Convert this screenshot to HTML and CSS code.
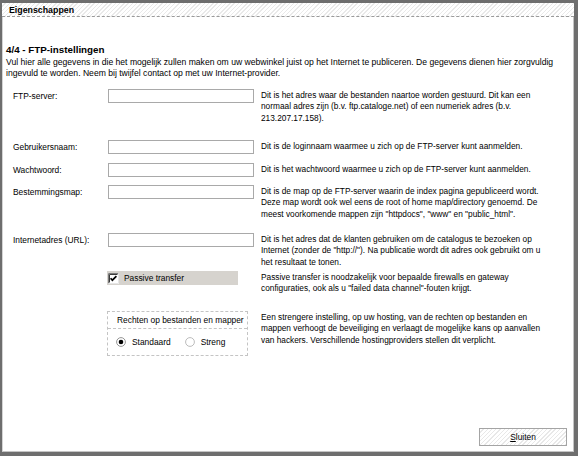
FILE: index.html
```html
<!DOCTYPE html>
<html lang="nl">
<head>
<meta charset="utf-8">
<title>Eigenschappen</title>
<link rel="stylesheet" href="styles.css">
</head>
<body>
<div class="window">
  <div class="titlebar"><span class="title">Eigenschappen</span></div>
  <div class="panel">
    <h1 class="step">4/4 - FTP-instellingen</h1>
    <p class="intro">Vul hier alle gegevens in die het mogelijk zullen maken om uw webwinkel juist op het Internet te publiceren. De gegevens dienen hier zorgvuldig<br>ingevuld te worden. Neem bij twijfel contact op met uw Internet-provider.</p>
    <div class="form">
      <label class="lbl">FTP-server:</label>
      <input class="field" type="text">
      <p class="hint">Dit is het adres waar de bestanden naartoe worden gestuurd. Dit kan een<br>normaal adres zijn (b.v. ftp.cataloge.net) of een numeriek adres (b.v.<br>213.207.17.158).</p>

      <label class="lbl">Gebruikersnaam:</label>
      <input class="field" type="text">
      <p class="hint">Dit is de loginnaam waarmee u zich op de FTP-server kunt aanmelden.</p>

      <label class="lbl">Wachtwoord:</label>
      <input class="field" type="password">
      <p class="hint">Dit is het wachtwoord waarmee u zich op de FTP-server kunt aanmelden.</p>

      <label class="lbl">Bestemmingsmap:</label>
      <input class="field" type="text">
      <p class="hint">Dit is de map op de FTP-server waarin de index pagina gepubliceerd wordt.<br>Deze map wordt ook wel eens de root of home map/directory genoemd. De<br>meest voorkomende mappen zijn "httpdocs", "www" en "public_html".</p>

      <label class="lbl">Internetadres (URL):</label>
      <input class="field" type="text">
      <p class="hint">Dit is het adres dat de klanten gebruiken om de catalogus te bezoeken op<br>Internet (zonder de "http://"). Na publicatie wordt dit adres ook gebruikt om u<br>het resultaat te tonen.</p>

      <span class="lbl"></span>
      <div class="passive">
        <svg class="check" width="11" height="11" viewBox="0 0 11 11"><rect x="0" y="0" width="11" height="11" fill="#fff"/><path d="M0.5 10.5V0.5H10.5" stroke="#7b7b7b" fill="none"/><path d="M1.5 9.5V1.5H9.5" stroke="#3a3a3a" fill="none"/><path d="M0.5 10.5H10.5V0.5" stroke="#e6e6e6" fill="none"/><path d="M2.6 5.2L4.4 7.2L8.4 3.2" stroke="#000" stroke-width="1.7" fill="none"/></svg>
        <span>Passive transfer</span>
      </div>
      <p class="hint">Passive transfer is noodzakelijk voor bepaalde firewalls en gateway<br>configuraties, ook als u "failed data channel"-fouten krijgt.</p>

      <span class="lbl"></span>
      <div class="rights">
        <div class="rights-title">Rechten op bestanden en mapper</div>
        <div class="rights-options">
          <span class="radio"><svg width="10" height="10" viewBox="0 0 10 10"><circle cx="5" cy="5" r="4.4" fill="#fff" stroke="#8a8a8a" stroke-width="0.9"/><circle cx="5" cy="5" r="2.3" fill="#000"/></svg>Standaard</span>
          <span class="radio"><svg width="10" height="10" viewBox="0 0 10 10"><circle cx="5" cy="5" r="4.4" fill="#fff" stroke="#b4b4b4" stroke-width="0.9"/></svg>Streng</span>
        </div>
      </div>
      <p class="hint">Een strengere instelling, op uw hosting, van de rechten op bestanden en<br>mappen verhoogt de beveiliging en verlaagt de mogelijke kans op aanvallen<br>van hackers. Verschillende hostingproviders stellen dit verplicht.</p>
    </div>
    <div class="actions"><button class="btn" type="button"><u>S</u>luiten</button></div>
  </div>
</div>
</body>
</html>
```

FILE: styles.css
```css
* { box-sizing: border-box; }
html, body { margin: 0; padding: 0; background: #fff; }
body {
  font-family: "Liberation Sans", Arial, sans-serif;
  font-size: 8.4px;
  color: #000;
}
.window {
  width: 578px;
  height: 456px;
  border-style: solid;
  border-color: #6e6e6e;
  border-width: 3px 4px 4px 2px;
  display: flex;
  flex-direction: column;
  background: #fff;
}
.titlebar {
  height: 14px;
  flex: none;
  border-bottom: 1px dashed #9a9a9a;
  background: repeating-linear-gradient(135deg, #ffffff 0 2px, #e9e9e9 2px 3px);
  padding-left: 7px;
  display: flex;
  align-items: center;
}
.title {
  font-weight: bold;
  font-size: 8.8px;
  line-height: 12px;
}
.panel {
  flex: 1;
  display: flex;
  flex-direction: column;
  border-left: 1px solid #d4d4d4;
  border-right: 1px solid #c4c4c4;
  border-bottom: 1px solid #c4c4c4;
  padding: 27px 6px 5px 3px;
}
.step {
  margin: 0;
  font-size: 9.8px;
  font-weight: bold;
  line-height: 12px;
}
.intro {
  margin: 1px 0 0;
  font-size: 8.6px;
  line-height: 11px;
  white-space: nowrap;
}
.form {
  margin: 10px 0 0 7px;
  display: grid;
  grid-template-columns: 88px 146px 1fr;
  grid-template-rows: 51px 23px 22px 48px 38px 40px auto;
  column-gap: 7px;
  align-items: start;
}
.lbl {
  line-height: 14px;
  white-space: nowrap;
}
.field {
  width: 146px;
  height: 14px;
  margin: 0;
  padding: 0 2px;
  border: 1px solid #a9a9a9;
  background: #fff;
  font: inherit;
}
.hint {
  margin: 0;
  padding-top: 1px;
  font-size: 8.3px;
  line-height: 11.3px;
  white-space: nowrap;
}
.passive {
  margin-left: -1px;
  width: 131px;
  height: 14px;
  background: #d6d3ce;
  display: flex;
  align-items: center;
  gap: 5px;
  padding-left: 1px;
}
.check { flex: none; }
.rights {
  margin-left: -1px;
  width: 141px;
  height: 45px;
  border: 1px dashed #c4c4c4;
  overflow: hidden;
}
.rights-title {
  height: 17px;
  line-height: 16px;
  padding-left: 9px;
  white-space: nowrap;
  overflow: hidden;
  border-bottom: 1px dashed #c4c4c4;
}
.rights-options {
  height: 26px;
  display: flex;
  align-items: center;
  padding-left: 8px;
  gap: 14px;
}
.radio {
  display: flex;
  align-items: center;
  gap: 6px;
}
.radio svg { flex: none; }
.actions {
  margin-top: auto;
  display: flex;
  justify-content: flex-end;
}
.btn {
  width: 88px;
  height: 18px;
  margin: 0;
  padding: 0;
  border: 1px solid #a4a4a4;
  background: repeating-linear-gradient(135deg, #ffffff 0 2px, #e8e8e8 2px 3px);
  font: inherit;
  color: #000;
}
.btn u { text-decoration: underline; }
```
